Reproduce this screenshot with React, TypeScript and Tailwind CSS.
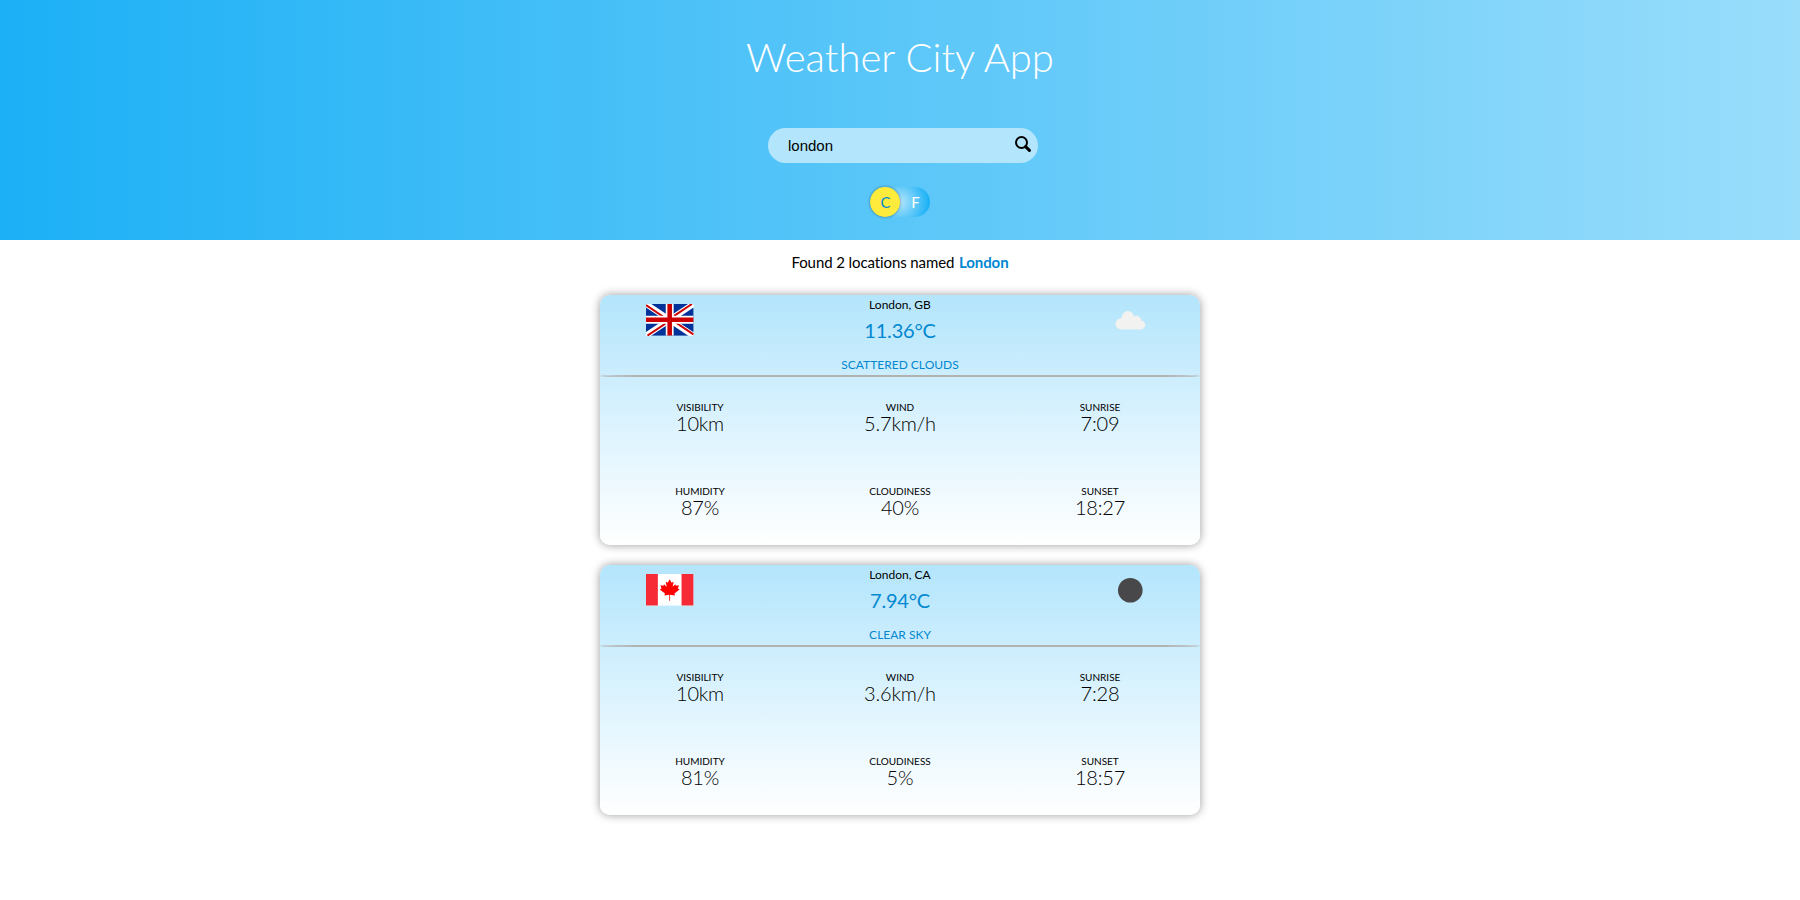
import React from "react";

type City = {
  name: string;
  flag: React.ReactNode;
  icon: React.ReactNode;
  temp: string;
  sky: string;
  stats: [string, string][];
};

const FlagGB = () => (
  <svg width="47.4" height="31.6" viewBox="0 0 48 32">
    <rect width="48" height="32" fill="#039" />
    <path d="M0 0L48 32M48 0L0 32" stroke="#fff" strokeWidth="6" />
    <path d="M0 1.2L22 16M48 30.8L26 16M46.5 0L24 15M1.5 32L24 17" stroke="#c00" strokeWidth="2" />
    <path d="M24 0V32M0 16H48" stroke="#fff" strokeWidth="8" />
    <path d="M24 0V32M0 16H48" stroke="#c00" strokeWidth="4.6" />
  </svg>
);

const FlagCA = () => (
  <svg width="47.4" height="31.6" viewBox="0 0 48 32">
    <rect width="48" height="32" fill="#fff" />
    <path d="M0 0H12V32H0zM36 0H48V32H36z" fill="#f62937" />
    <path
      d="M24 5.2L22.1 8.8L20 7.8L21 13L18.2 10.4L17.7 11.8L14.6 11.3L15.7 14.6L14 15.6L19.2 19.7L18.6 21.7L23.6 21V27.2H24.4V21L29.4 21.7L28.8 19.7L34 15.6L32.3 14.6L33.4 11.3L30.3 11.8L29.8 10.4L27 13L28 7.8L25.9 8.8Z"
      fill="#f00"
    />
  </svg>
);

const Cloud = () => (
  <svg width="50" height="50" viewBox="0 0 50 50">
    <g fill="#f2f2f0">
      <circle cx="15.9" cy="28.9" r="5.4" />
      <circle cx="22.9" cy="22.2" r="6.1" />
      <circle cx="31.4" cy="24.6" r="3.8" />
      <circle cx="35.9" cy="30" r="4.4" />
      <rect x="15.8" y="23" width="20.2" height="11.4" />
    </g>
  </svg>
);

const Moon = () => (
  <svg width="50" height="50" viewBox="0 0 50 50">
    <circle cx="25.3" cy="25.3" r="12.3" fill="#48484a" />
  </svg>
);

const cities: City[] = [
  {
    name: "London, GB",
    flag: <FlagGB />,
    icon: <Cloud />,
    temp: "11.36°C",
    sky: "SCATTERED CLOUDS",
    stats: [
      ["VISIBILITY", "10km"],
      ["WIND", "5.7km/h"],
      ["SUNRISE", "7:09"],
      ["HUMIDITY", "87%"],
      ["CLOUDINESS", "40%"],
      ["SUNSET", "18:27"],
    ],
  },
  {
    name: "London, CA",
    flag: <FlagCA />,
    icon: <Moon />,
    temp: "7.94°C",
    sky: "CLEAR SKY",
    stats: [
      ["VISIBILITY", "10km"],
      ["WIND", "3.6km/h"],
      ["SUNRISE", "7:28"],
      ["HUMIDITY", "81%"],
      ["CLOUDINESS", "5%"],
      ["SUNSET", "18:57"],
    ],
  },
];

const CityCard = ({ city }: { city: City }) => (
  <article className="h-[250px] w-[600px] rounded-[10px] bg-linear-to-b from-[#b3e5fc] to-white shadow-[0_0_10px_rgba(0,0,0,0.4)]">
    <div className="grid h-20 grid-cols-[140px_1fr_140px] text-center">
      <div className="flex justify-center pt-[9px]">{city.flag}</div>
      <div className="flex flex-col items-center text-[#0288d1]">
        <h2 className="h-5 text-[12px] leading-5 text-black">{city.name}</h2>
        <p className="h-[30px] text-[20px] leading-[30px] tracking-[-0.2px]">{city.temp}</p>
        <p className="mt-3 text-[12px] leading-4">{city.sky}</p>
      </div>
      <div className="flex justify-center">{city.icon}</div>
    </div>
    <div className="h-[2px] rounded-[60px/1px] bg-[#b2b2b2]" />
    <dl className="grid grid-cols-3 pt-6 text-center">
      {city.stats.map(([label, value]) => (
        <div key={label} className="h-[84px]">
          <dt className="text-[10px] leading-3">{label}</dt>
          <dd className="text-[20px] leading-5 font-light tracking-[-0.2px]">{value}</dd>
        </div>
      ))}
    </dl>
  </article>
);

export default function App() {
  return (
    <div className="min-h-[900px] bg-white font-[Lato,sans-serif] text-black [font-variant-ligatures:none]">
      <header className="flex h-60 flex-col items-center bg-linear-to-r/srgb from-[#1cb0f6] to-[#99ddfb]">
        <h1 className="mt-[33px] text-[40px] leading-[48px] font-light text-white">Weather City App</h1>
        <form className="mt-[47px] ml-[6px] flex h-[35px] w-[270px] items-center justify-between rounded-full bg-[#b3e5fc] pr-[7px] pl-5">
          <span className="font-['Liberation_Sans',sans-serif] text-[15px] leading-[18px]">london</span>
          <svg width="16" height="16" viewBox="0 0 16 16" fill="none" stroke="#000" className="mb-[3px]">
            <circle cx="6.5" cy="6.5" r="5.5" strokeWidth="2" />
            <path d="M10.6 10.6L14.4 14.4" strokeWidth="3" strokeLinecap="round" />
          </svg>
        </form>
        <div className="mt-6 flex h-[30px] w-[60px] rounded-full bg-[radial-gradient(circle,#b3e5fc,#03a9f4)] text-center text-[15px] leading-[30px]">
          <span className="w-[30px] rounded-full bg-[#ffeb3b] pl-px text-[#0288d1] shadow-[0_0_3px_rgba(0,0,0,0.4)]">C</span>
          <span className="w-[30px] pl-px text-white">F</span>
        </div>
      </header>
      <main className="flex flex-col items-center">
        <p className="mt-3 mb-[23px] text-[15px] leading-5 tracking-[-0.1px]">
          Found 2 locations named <strong className="ml-px font-bold text-[#0288d1]">London</strong>
        </p>
        <div className="flex flex-col gap-5">
          {cities.map((c) => (
            <CityCard key={c.name} city={c} />
          ))}
        </div>
      </main>
    </div>
  );
}
